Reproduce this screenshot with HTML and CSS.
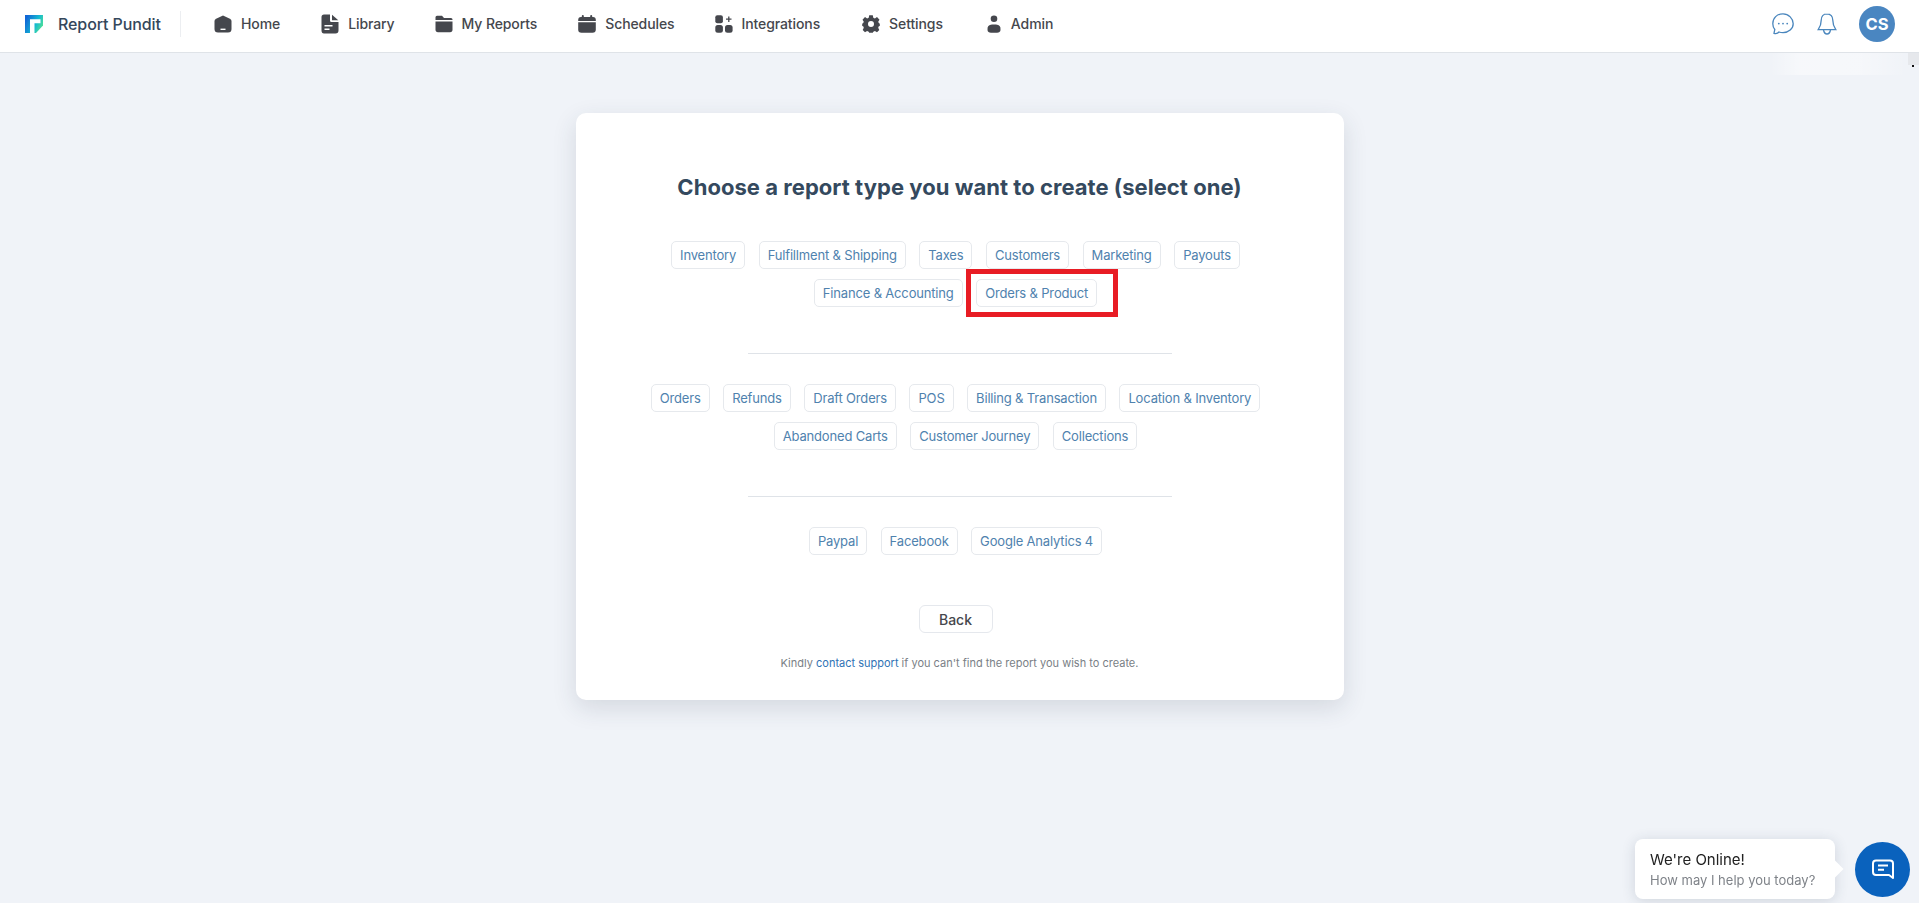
FILE: index.html
```html
<!DOCTYPE html>
<html lang="en">
<head>
<meta charset="utf-8">
<title>Report Pundit</title>
<link rel="stylesheet" href="styles.css">
</head>
<body>
<header class="topbar">
  <a class="brand">
    <svg class="brand-logo" viewBox="0 0 18 18" width="18" height="18">
      <defs><linearGradient id="lg" x1="0" y1=".35" x2="1" y2=".8"><stop offset="0" stop-color="#1266d6"/><stop offset=".55" stop-color="#14b9d2"/><stop offset="1" stop-color="#5be88a"/></linearGradient></defs>
      <path d="M0 0H18V10.500L11 18H0Z" fill="url(#lg)"/>
      <path d="M5 18V4.200H15.500V8.300H9.500V18Z" fill="#fff"/>
    </svg>
    <span class="brand-name">Report Pundit</span>
  </a>
  <nav class="nav">
    <a class="nav-item i-home"><svg viewBox="0 0 18 18" width="18" height="18"><path d="M9 .6 15.900 3.700Q17.500 4.500 17.500 6V14Q17.500 17.600 14 17.600H4Q.5 17.600 .5 14V6Q.5 4.500 2.100 3.700Z" fill="#45474d"/><rect x="6.500" y="13.600" width="5" height="1.400" fill="#fff"/></svg>Home</a>
    <a class="nav-item i-lib"><svg viewBox="0 0 18 20" width="18" height="20"><path d="M3 .5H9V6.500Q9 8 10.500 8H17.500V16.500Q17.500 19.500 14.500 19.500H3Q.5 19.500 .5 16.500V3Q.5 .5 3 .5Z" fill="#45474d"/><path d="M11 .8 17.300 6.300H11Z" fill="#45474d"/><rect x="3.500" y="11" width="8" height="1.500" fill="#fff"/><rect x="3.500" y="14.500" width="5" height="1.500" fill="#fff"/></svg>Library</a>
    <a class="nav-item i-rep"><svg viewBox="0 0 18 18" width="18" height="18"><path d="M2 .8H7L9 3H16Q17.500 3 17.500 4.500V5H.5V2.300Q.5 .8 2 .8Z" fill="#45474d"/><path d="M.5 6.500H17.500V14.500Q17.500 17.200 15 17.200H3Q.5 17.200 .5 14.500Z" fill="#45474d"/></svg>My Reports</a>
    <a class="nav-item i-sch"><svg viewBox="0 0 18 18" width="18" height="18"><rect x="3.800" y="0" width="2" height="4" rx="1" fill="#45474d"/><rect x="12.200" y="0" width="2" height="4" rx="1" fill="#45474d"/><path d="M3 2H15Q17.800 2 17.800 5V6H.2V5Q.2 2 3 2Z" fill="#45474d"/><path d="M.2 7.300H17.800V14.500Q17.800 17.800 14.500 17.800H3.500Q.2 17.800 .2 14.500Z" fill="#45474d"/></svg>Schedules</a>
    <a class="nav-item i-int"><svg viewBox="0 0 18 18" width="18" height="18"><rect x=".3" y=".3" width="7.600" height="8" rx="2" fill="#45474d"/><rect x=".3" y="10" width="7.600" height="7.800" rx="2.500" fill="#45474d"/><rect x="10" y="10" width="7.600" height="7.800" rx="2.500" fill="#45474d"/><path d="M13.800 1.500V7M11 4.200H16.500" stroke="#45474d" stroke-width="1.300" fill="none"/></svg>Integrations</a>
    <a class="nav-item i-set"><svg viewBox="0 0 18 18" width="18" height="18"><path fill-rule="evenodd" d="M7.200.3H10.800L11.300 2.700 12.900 3.400 15 2.100 17.500 4.700 16.200 6.800 16.800 8 17.800 8.800V10.900L16.800 11.300 16.200 12.800 17.300 15 15 17.300 12.900 16.100 11.300 16.700 10.800 17.800H7.200L6.700 16.700 5.100 16.100 3 17.300.7 15 1.800 12.800 1.200 11.300.2 10.900V8.800L1.200 8 1.800 6.800.5 4.700 3 2.100 5.100 3.400 6.700 2.700ZM9 6A3 3 0 1 0 9 12 3 3 0 1 0 9 6Z" fill="#45474d"/></svg>Settings</a>
    <a class="nav-item i-adm"><svg viewBox="0 0 16 18" width="16" height="18"><circle cx="8" cy="3.800" r="3.300" fill="#45474d"/><path d="M1.500 15Q1 9.800 6 9.600H10Q15 9.800 14.500 15 14.200 17.800 11 17.800H5Q1.800 17.800 1.500 15Z" fill="#45474d"/></svg>Admin</a>
  </nav>
  <div class="top-actions">
    <svg class="act-chat" viewBox="0 0 22 22" width="22" height="22" fill="none" stroke="#4a86bd" stroke-width="1.300"><path d="M11 .8C5 .8.8 5 .8 10.700c0 2.300.7 4.200 2 5.800L2 20.300c2.300 .6 4-.1 5-1.300 1.200.4 2.500.6 4 .6 5.600 0 10.200-3.900 10.200-8.900S16.600.8 11 .8Z"/><circle cx="6.800" cy="10.600" r=".9" fill="#4a86bd" stroke="none"/><circle cx="11" cy="10.600" r=".9" fill="#4a86bd" stroke="none"/><circle cx="15.200" cy="10.600" r=".9" fill="#4a86bd" stroke="none"/></svg>
    <svg class="act-bell" viewBox="0 0 20 22" width="20" height="22" fill="none" stroke="#4a86bd" stroke-width="1.300"><path d="M10 .8C6.300.8 4.200 3.700 4.200 7.200 4.200 11.500 3.500 13.500 1.200 16.700H18.800C16.500 13.500 15.800 11.500 15.800 7.200 15.800 3.700 13.700.8 10 .8Z"/><path d="M6.500 17C7 19.500 8.300 21 10 21S13 19.500 13.500 17"/></svg>
    <span class="avatar">CS</span>
  </div>
</header>

<div class="smudge"></div>

<main class="page">
  <section class="card">
    <h1 class="title">Choose a report type you want to create (select one)</h1>
    <div class="chips">
      <a class="chip">Inventory</a><a class="chip">Fulfillment &amp; Shipping</a><a class="chip">Taxes</a><a class="chip">Customers</a><a class="chip">Marketing</a><a class="chip">Payouts</a><a class="chip">Finance &amp; Accounting</a><a class="chip chip-marked">Orders &amp; Product</a>
    </div>
    <hr class="rule">
    <div class="chips">
      <a class="chip">Orders</a><a class="chip">Refunds</a><a class="chip">Draft Orders</a><a class="chip">POS</a><a class="chip">Billing &amp; Transaction</a><a class="chip">Location &amp; Inventory</a><a class="chip">Abandoned Carts</a><a class="chip">Customer Journey</a><a class="chip">Collections</a>
    </div>
    <hr class="rule">
    <div class="chips">
      <a class="chip">Paypal</a><a class="chip">Facebook</a><a class="chip">Google Analytics 4</a>
    </div>
    <button class="back">Back</button>
    <p class="note">Kindly <a class="note-link">contact support</a> if you can't find the report you wish to create.</p>
  </section>
</main>

<aside class="chat-widget">
  <div class="bubble">
    <div class="bubble-title">We're Online!</div>
    <div class="bubble-sub">How may I help you today?</div>
  </div>
  <span class="chat-btn">
    <svg viewBox="0 0 24 24" width="24" height="24" fill="none" stroke="#fff" stroke-width="2"><path d="M5 3.500H19Q22 3.500 22 6.500V21L18 18H5Q2 18 2 15V6.500Q2 3.500 5 3.500Z" stroke-linejoin="round"/><path d="M7 8.500H17M7 12.800H13"/></svg>
  </span>
</aside>
</body>
</html>
```

FILE: styles.css
```css
* { box-sizing: border-box; }
html, body { height: 100%; }
body {
  margin: 0;
  background: #f0f3f8;
  font-family: Inter, "Noto Sans", sans-serif;
  overflow: hidden;
}
.topbar {
  height: 53px;
  background: #fff;
  border-bottom: 1px solid #dfe3e8;
  display: flex;
  align-items: center;
  padding: 0 24px 5px 25px;
}
.brand {
  display: flex;
  align-items: center;
  gap: 15px;
  height: 26px;
  padding-right: 20px;
  border-right: 1px solid #eceef1;
  width: 156px;
}
.brand-logo { flex: none; }
.brand-name {
  font-size: 16px;
  letter-spacing: -.1px;
  font-weight: 500;
  color: #34475b;
  white-space: nowrap;
}
.nav {
  display: flex;
  align-items: center;
  margin-left: 33px;
}
.nav-item {
  display: flex;
  align-items: center;
  gap: 9px;
  font-size: 14px;
  letter-spacing: -.1px;
  font-weight: 500;
  color: #45474d;
  white-space: nowrap;
}
.i-lib { margin-left: 41px; }
.i-rep { margin-left: 40px; }
.i-sch { margin-left: 41px; }
.i-int { margin-left: 40px; }
.i-set { margin-left: 42px; }
.i-adm { margin-left: 43px; }
.top-actions {
  margin-left: auto;
  display: flex;
  align-items: center;
}
.act-bell { margin-left: 23px; }
.avatar {
  margin-left: 22px;
  width: 36px;
  height: 36px;
  border-radius: 50%;
  background: #4a86c1;
  color: #fff;
  font-size: 16.500px;
  font-weight: 700;
  display: flex;
  align-items: center;
  justify-content: center;
}
.smudge {
  position: absolute;
  top: 53px;
  left: 1770px;
  width: 149px;
  height: 22px;
  background: linear-gradient(to right, rgba(255,255,255,0), rgba(255,255,255,.45) 20%, rgba(255,255,255,.4) 60%, rgba(255,255,255,0) 92%);
}
.smudge::before {
  content: "";
  position: absolute;
  top: 0;
  right: 0;
  width: 11px;
  height: 12px;
  background: #e6e8ec;
}
.smudge::after {
  content: "";
  position: absolute;
  top: 12px;
  right: 5px;
  width: 2px;
  height: 2px;
  background: #111;
}
.page {
  padding-top: 60px;
  display: flex;
  justify-content: center;
}
.card {
  width: 768px;
  height: 587px;
  background: #fff;
  border-radius: 10px;
  box-shadow: 0 8px 24px rgba(40, 55, 80, .14);
  padding-top: 59px;
  display: flex;
  flex-direction: column;
  align-items: center;
}
.title {
  margin: 0 0 39px;
  font-size: 22px;
  letter-spacing: .04px;
  line-height: 30px;
  font-weight: 700;
  color: #34495e;
  white-space: nowrap;
}
.chips {
  width: 680px;
  padding-right: 8px;
  display: flex;
  flex-wrap: wrap;
  justify-content: center;
  gap: 10px 13.500px;
}
.chip {
  height: 28px;
  padding: 0 8px;
  display: flex;
  align-items: center;
  font-size: 13px;
  letter-spacing: -.17px;
  color: #4f82ae;
  background: #fff;
  border: 1px solid #e6e9ed;
  border-radius: 5px;
  white-space: nowrap;
}
.chip-marked { position: relative; }
.chip-marked::after {
  content: "";
  position: absolute;
  top: -11px;
  bottom: -11px;
  left: -11px;
  right: -22px;
  border: 5px solid #e81c24;
  pointer-events: none;
}
.rule {
  width: 424px;
  height: 1px;
  border: 0;
  margin: 46px 0 30px;
  background: #dfe3e8;
}
.back {
  margin: 50px 8px 0 0;
  width: 74px;
  height: 28px;
  font: 500 14px Inter, sans-serif;
  color: #45474d;
  background: #fff;
  border: 1px solid #e5e8ed;
  border-radius: 6px;
  padding: 0;
}
.note {
  margin: 22px 0 0;
  font-size: 11px;
  line-height: 16px;
  color: #7a7f86;
}
.note-link { color: #2f73b5; }
.chat-widget {
  position: fixed;
  right: 9px;
  bottom: 4px;
  display: flex;
  align-items: center;
  gap: 20px;
}
.bubble {
  position: relative;
  width: 200px;
  height: 60px;
  background: #fff;
  border-radius: 8px;
  box-shadow: 0 2px 14px rgba(40, 55, 80, .16);
  padding: 11px 15px;
}
.bubble::after {
  content: "";
  position: absolute;
  right: -6px;
  top: 24px;
  width: 12px;
  height: 12px;
  background: #fff;
  transform: rotate(45deg);
}
.bubble-title { font-size: 15px; line-height: 20px; color: #222; }
.bubble-sub { font-size: 13px; line-height: 20px; color: #7f8389; }
.chat-btn {
  width: 55px;
  height: 55px;
  border-radius: 50%;
  background: #0a62bd;
  display: flex;
  align-items: center;
  justify-content: center;
}
```
